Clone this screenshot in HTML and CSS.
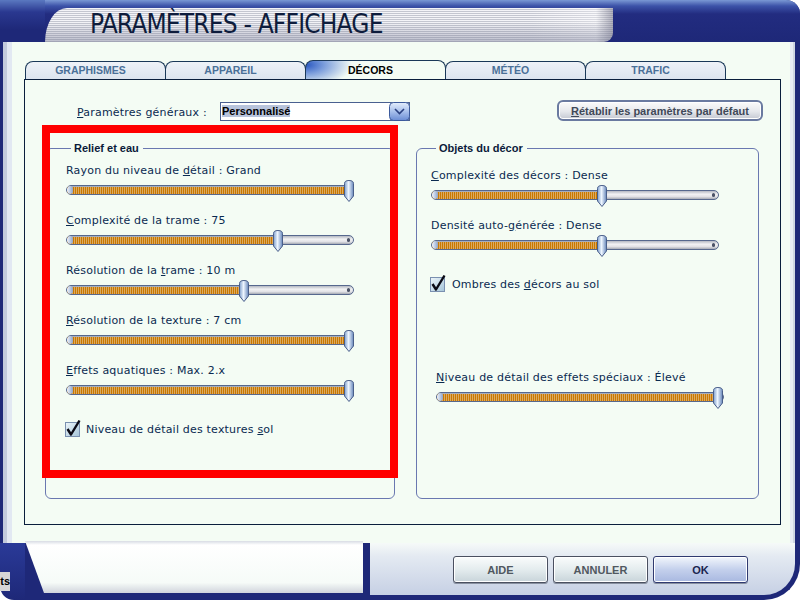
FILE: index.html
```html
<!DOCTYPE html>
<html lang="fr">
<head>
    <meta charset="UTF-8">
    <title>Paramètres - Affichage</title>
    <link rel="stylesheet" href="styles.css">
</head>
<body>
<div class="window">

    <!-- barre de titre -->
    <div class="titlebar">
        <div class="title-cap"></div>
        <div class="title"><h1>PARAMÈTRES - AFFICHAGE</h1></div>
        <div class="title-rest"></div>
    </div>

    <div class="client">
        <div class="tabs">
            <div class="tab">GRAPHISMES</div>
            <div class="tab">APPAREIL</div>
            <div class="tab active">DÉCORS</div>
            <div class="tab">MÉTÉO</div>
            <div class="tab">TRAFIC</div>
        </div>

        <div class="panel">
            <div class="general-row">
                <span class="general-label"><u>P</u>aramètres généraux :</span>
                <div class="combo">
                    <span class="combo-value">Personnalisé</span>
                    <span class="combo-btn">
                        <svg width="21" height="19" viewBox="0 0 21 19">
                            <defs>
                                <linearGradient id="cb" x1="0" y1="0" x2="0" y2="1">
                                    <stop offset="0" stop-color="#e4eefc"/>
                                    <stop offset="0.5" stop-color="#a8c0ec"/>
                                    <stop offset="1" stop-color="#6a8cd4"/>
                                </linearGradient>
                            </defs>
                            <rect x="0.5" y="0.5" width="20" height="18" rx="4" fill="url(#cb)" stroke="#3c5a9c"/>
                            <path d="M6 7 L10.5 11.5 L15 7" fill="none" stroke="#2a4080" stroke-width="1.6"/>
                        </svg>
                    </span>
                </div>
                <button class="reset-btn"><u>R</u>établir les paramètres par défaut</button>
            </div>

            <div class="groups">
                <fieldset class="group group-left">
                    <legend>Relief et eau</legend>

                    <div class="setting">
                        <div class="setting-label">Rayon du niveau de <u>d</u>étail : Grand</div>
                        <div class="slider">
                            <div class="track"><div class="fill" style="width: 100%"></div></div>
                            <span class="thumb" style="left: 278px"></span>
                        </div>
                    </div>
                    <div class="setting">
                        <div class="setting-label"><u>C</u>omplexité de la trame : 75</div>
                        <div class="slider">
                            <div class="track"><div class="fill" style="width: 73%"></div></div>
                            <span class="thumb" style="left: 207px"></span>
                        </div>
                    </div>
                    <div class="setting">
                        <div class="setting-label">Résolution de la <u>t</u>rame : 10 m</div>
                        <div class="slider">
                            <div class="track"><div class="fill" style="width: 61%"></div></div>
                            <span class="thumb" style="left: 173px"></span>
                        </div>
                    </div>
                    <div class="setting">
                        <div class="setting-label"><u>R</u>ésolution de la texture : 7 cm</div>
                        <div class="slider">
                            <div class="track"><div class="fill" style="width: 100%"></div></div>
                            <span class="thumb" style="left: 278px"></span>
                        </div>
                    </div>
                    <div class="setting">
                        <div class="setting-label"><u>E</u>ffets aquatiques : Max. 2.x</div>
                        <div class="slider">
                            <div class="track"><div class="fill" style="width: 100%"></div></div>
                            <span class="thumb" style="left: 278px"></span>
                        </div>
                    </div>

                    <div class="check">
                        <svg class="check-box" width="17" height="18" viewBox="0 0 17 18">
                            <use href="#tick"/>
                        </svg>
                        <span>Niveau de détail des textures <u>s</u>ol</span>
                    </div>
                </fieldset>

                <fieldset class="group group-right">
                    <legend>Objets du décor</legend>

                    <div class="setting">
                        <div class="setting-label"><u>C</u>omplexité des décors : Dense</div>
                        <div class="slider">
                            <div class="track"><div class="fill" style="width: 59%"></div></div>
                            <span class="thumb" style="left: 166px"></span>
                        </div>
                    </div>
                    <div class="setting">
                        <div class="setting-label">Densité auto-<u>g</u>énérée : Dense</div>
                        <div class="slider">
                            <div class="track"><div class="fill" style="width: 59%"></div></div>
                            <span class="thumb" style="left: 166px"></span>
                        </div>
                    </div>

                    <div class="check">
                        <svg class="check-box" width="17" height="18" viewBox="0 0 17 18">
                            <use href="#tick"/>
                        </svg>
                        <span>Ombres des <u>d</u>écors au sol</span>
                    </div>

                    <div class="setting setting-fx">
                        <div class="setting-label"><u>N</u>iveau de détail des effets spéciaux : Élevé</div>
                        <div class="slider">
                            <div class="track"><div class="fill" style="width: 100%"></div></div>
                            <span class="thumb" style="left: 277px"></span>
                        </div>
                    </div>
                </fieldset>
            </div>

            <div class="highlight"></div>
        </div>
    </div>

    <div class="footer">
        <div class="footer-edge"><span class="peek">ts</span></div>
        <div class="status-wrap"><div class="status-tab"></div></div>
        <div class="footer-bar">
            <button class="dlg-btn">AIDE</button>
            <button class="dlg-btn">ANNULER</button>
            <button class="dlg-btn ok">OK</button>
        </div>
    </div>
</div>

<!-- case cochée, réutilisée par les deux cases -->
<svg width="0" height="0" class="defs">
    <defs>
        <linearGradient id="boxfill" x1="0" y1="0" x2="1" y2="1">
            <stop offset="0" stop-color="#eef6fa"/>
            <stop offset="1" stop-color="#a4c4d8"/>
        </linearGradient>
        <g id="tick">
            <rect x="1.5" y="3.5" width="14" height="14" fill="url(#boxfill)" stroke="#7a90b0"/>
            <path d="M3.5 10 L7 15.5 L15.5 1.5" fill="none" stroke="#0a0a14" stroke-width="2.4" stroke-linejoin="round"/>
        </g>
    </defs>
</svg>
</body>
</html>
```

FILE: styles.css
```css
/* styles.css */

html, body {
    margin: 0;
    padding: 0;
    background-color: #ffffff;
}

body {
    width: 800px;
    height: 600px;
    overflow: hidden;
    font-family: "DejaVu Sans", Verdana, sans-serif;
}

.defs {
    position: absolute;
}

.window {
    width: 800px;
    height: 600px;
    background-color: #1e2878;
    border-top-right-radius: 14px;
    display: flex;
    flex-direction: column;
}

/* ---- barre de titre ---- */

.titlebar {
    height: 42px;
    display: flex;
    background: linear-gradient(to bottom, #7a98d4 0, #3c52a8 6px, #222c80 14px, #1e2878 100%);
    border-top-right-radius: 14px;
}

.title-cap {
    width: 45px;
    background: linear-gradient(to bottom, #5a78c0 0, #2a3890 12px, #1e2878 30px);
}

.title {
    width: 568px;
    margin-top: 8px;
    height: 34px;
    border-top-left-radius: 22px 34px;
    border-bottom-right-radius: 9px;
    background:
        linear-gradient(to bottom, rgba(255,255,255,0) 40%, rgba(120,124,150,0.45) 100%),
        linear-gradient(to right, rgba(255,255,255,0) 85%, rgba(255,255,255,0.35) 97%, rgba(110,110,130,0.5) 100%),
        repeating-linear-gradient(to bottom, #f4f4f8 0, #f4f4f8 1px, #c4c6d0 1px, #c4c6d0 2px);
    box-sizing: border-box;
    padding-left: 45px;
}

.title h1 {
    margin: 0;
    font-family: "DejaVu Sans Condensed", "Liberation Sans Narrow", "DejaVu Sans", sans-serif;
    font-weight: normal;
    font-size: 26px;
    line-height: 33px;
    color: #0e1c3c;
    letter-spacing: -0.8px;
}

.title-rest {
    flex: 1;
}

/* ---- zone cliente ---- */

.client {
    height: 501px;
    margin: 0 5px 0 3px;
    box-sizing: border-box;
    padding: 18px 14px 18px 21px;
    background:
        linear-gradient(to right, #c2cadc 0, #c2cadc 4px, #e2e8f2 4px, #e2e8f2 9px, rgba(0,0,0,0) 9px),
        linear-gradient(to left, #cfd6e2 0, #cfd6e2 2px, #e8edf4 2px, #e8edf4 5px, rgba(0,0,0,0) 5px),
        #f4fcf4;
}

.tabs {
    display: flex;
    align-items: flex-end;
    height: 19px;
    padding-left: 1px;
}

.tab {
    width: 141px;
    height: 18px;
    margin-right: -1px;
    box-sizing: border-box;
    border: 1px solid #1a3858;
    border-bottom: none;
    border-radius: 8px 8px 0 0;
    background: linear-gradient(to bottom, #eef2f8, #dce4ee);
    font-family: "Liberation Sans", Arial, sans-serif;
    font-weight: bold;
    font-size: 10.5px;
    line-height: 17px;
    color: #4a7098;
    text-align: center;
    padding-right: 10px;
}

.tab.active {
    height: 20px;
    margin-bottom: -1px;
    position: relative;
    background:
        radial-gradient(ellipse 46px 22px at 0 20%, #2a58c0 0, #7c9edc 40%, rgba(244,252,244,0) 100%),
        #f4fcf4;
    color: #000000;
    line-height: 18px;
}

.panel {
    position: relative;
    height: 446px;
    box-sizing: border-box;
    border: 1px solid #0a1e3c;
    background-color: #f4fcf4;
    padding: 20px 17px 0 20px;
}

/* ---- ligne des paramètres généraux ---- */

.general-row {
    display: flex;
    align-items: center;
    height: 21px;
}

.general-label {
    width: 143px;
    padding-left: 32px;
    padding-top: 3px;
    font-size: 11px;
    letter-spacing: 0.2px;
    color: #0a2a50;
}

.combo {
    width: 190px;
    height: 19px;
    margin-top: 2px;
    display: flex;
    box-sizing: border-box;
    border: 1px solid #4a6090;
    background-color: #ffffff;
}

.combo-value {
    flex: 1;
    margin: 1px;
    font-family: "Liberation Sans", Arial, sans-serif;
    font-weight: bold;
    font-size: 11px;
    line-height: 15px;
    color: #000000;
}

.combo-value::first-line {
    background-color: #b8c4dc;
}

.combo-btn {
    width: 21px;
    height: 19px;
    margin: -1px -1px 0 0;
}

.reset-btn {
    margin-left: auto;
    width: 206px;
    height: 21px;
    padding: 0;
    border: 2px solid #6a7aa0;
    border-radius: 6px;
    background: linear-gradient(to bottom, #fbfbfb 0, #e6e8ec 55%, #c4c8d2 100%);
    box-shadow: inset 0 0 0 1px #ffffff;
    font-family: "Liberation Sans", Arial, sans-serif;
    font-weight: bold;
    font-size: 11px;
    color: #404858;
}

/* ---- groupes ---- */

.groups {
    display: flex;
    gap: 21px;
    margin-top: 20px;
}

.group {
    margin: 0;
    height: 358px;
    box-sizing: border-box;
    border: 1px solid #6a78b0;
    border-radius: 6px;
    padding: 9px 0 0 20px;
}

.group legend {
    margin-left: 5px;
    padding: 0 4px 0 3px;
    font-family: "Liberation Sans", Arial, sans-serif;
    font-weight: bold;
    font-size: 11px;
    line-height: 14px;
    color: #0a1a3a;
}

.group-left {
    width: 350px;
}

.group-right {
    width: 343px;
    padding-left: 14px;
    padding-top: 14px;
}

.setting {
    margin-bottom: 12px;
}

.setting-label {
    font-size: 11px;
    letter-spacing: 0.2px;
    line-height: 14px;
    color: #0a2a50;
    margin-bottom: 2px;
    white-space: nowrap;
}

.setting-fx {
    margin-top: 79px;
    margin-left: 5px;
}

/* ---- curseurs ---- */

.slider {
    position: relative;
    width: 288px;
    height: 22px;
    padding-top: 5px;
    box-sizing: border-box;
}

.track {
    position: relative;
    height: 10px;
    box-sizing: border-box;
    border: 1px solid #56688e;
    border-radius: 5px;
    overflow: hidden;
    background: linear-gradient(to bottom, #b4b8c2 0, #f2f2f4 40%, #e2e2e6 70%, #a6aab4 100%);
}

.track::before {
    content: "";
    position: absolute;
    left: 0;
    top: 0;
    width: 6px;
    height: 8px;
    border-radius: 4px;
    background: linear-gradient(to right, #eef4ff, #8ea4c8);
    z-index: 1;
}

.track::after {
    content: "";
    position: absolute;
    right: 3px;
    top: 2px;
    width: 3px;
    height: 4px;
    border-radius: 2px;
    background-color: #4a5266;
}

.fill {
    height: 100%;
    background:
        linear-gradient(to bottom, #a6aebe 0, #a6aebe 1px, rgba(0,0,0,0) 1px),
        repeating-linear-gradient(to right, #c87800 0, #c87800 1px, #dcaa60 1px, #dcaa60 2px);
}

.thumb {
    position: absolute;
    top: 0;
    width: 10px;
    height: 22px;
    background: url("data:image/svg+xml,%3Csvg xmlns='http://www.w3.org/2000/svg' width='10' height='22' viewBox='0 0 10 22'%3E%3Cdefs%3E%3ClinearGradient id='g' x1='0' x2='1'%3E%3Cstop offset='0' stop-color='%237f9fcc'/%3E%3Cstop offset='0.45' stop-color='%23eef6ff'/%3E%3Cstop offset='1' stop-color='%236686ba'/%3E%3C/linearGradient%3E%3C/defs%3E%3Cpath d='M0.5 3.5 Q0.5 0.5 5 0.5 Q9.5 0.5 9.5 3.5 L9.5 16 L5 21.5 L0.5 16 Z' fill='url(%23g)' stroke='%234a5f8a'/%3E%3C/svg%3E") no-repeat;
}

/* ---- cases à cocher ---- */

.check {
    display: flex;
    align-items: center;
    gap: 5px;
    margin-top: 17px;
    margin-left: -2px;
    font-size: 11px;
    letter-spacing: 0.2px;
    color: #0a2a50;
}

.check span {
    padding-top: 3px;
}

.group-right .check {
    margin-top: 17px;
    margin-left: -2px;
    gap: 6px;
}

/* cadre rouge de mise en évidence */
.highlight {
    position: absolute;
    left: 17px;
    top: 45px;
    width: 356px;
    height: 353px;
    box-sizing: border-box;
    border: 8px solid #ff0000;
}

/* ---- pied de fenêtre ---- */

.footer {
    height: 57px;
    display: flex;
    background-color: #ffffff;
}

.footer-edge {
    width: 25px;
    display: flex;
    flex-direction: column;
    justify-content: flex-end;
    padding-bottom: 9px;
    box-sizing: border-box;
    background: linear-gradient(to bottom, #2a3a98, #1e2878);
    border-bottom-left-radius: 14px;
}

.peek {
    width: 10px;
    height: 19px;
    overflow: hidden;
    direction: rtl;
    background-color: #d6d6d6;
    font-family: "Liberation Sans", Arial, sans-serif;
    font-weight: bold;
    font-size: 11px;
    line-height: 19px;
    color: #000000;
}

.status-wrap {
    width: 345px;
    background-color: #1e2878;
}

.status-tab {
    width: 338px;
    height: 52px;
    margin-top: -2px;
    clip-path: polygon(0 0, 100% 0, 100% 100%, 19px 100%);
    background: linear-gradient(to bottom, #d8dce4 0, #ffffff 4px, #f6fbf8 80%, #d0d4dc 100%);
}

.footer-bar {
    flex: 1;
    display: flex;
    justify-content: flex-end;
    align-items: flex-start;
    gap: 5px;
    padding: 13px 47px 0 0;
    border-right: 5px solid #1e2878;
    border-bottom: 5px solid #1e2878;
    border-bottom-right-radius: 36px;
    background: linear-gradient(to bottom, #f6faf8 0, #e4eaf2 25%, #c6d0e4 100%);
}

.dlg-btn {
    width: 95px;
    height: 27px;
    padding: 0;
    border: 1px solid #4a5060;
    border-radius: 3px;
    background: linear-gradient(to bottom, #fafcfc 0, #e4ecee 50%, #c8d4da 100%);
    box-shadow: inset 0 0 0 1px #ffffff, 0 1px 0 #8890a0;
    font-family: "Liberation Sans", Arial, sans-serif;
    font-weight: bold;
    font-size: 11px;
    color: #505860;
}

.dlg-btn.ok {
    border-color: #303a70;
    background: linear-gradient(to bottom, #f2f6fc 0, #c4d0ec 50%, #a8b8e0 100%);
    color: #1a2450;
}
```
